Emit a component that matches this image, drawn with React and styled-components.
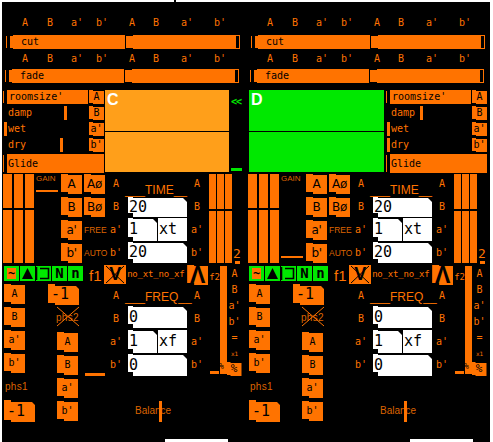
import React from 'react'
import styled, { createGlobalStyle } from 'styled-components'

const ORANGE = '#ff7300'
const DIM = '#dd6400'
const GREEN = '#00e800'
const MONO = '"DejaVu Sans Mono", monospace'
const SANS = '"Liberation Sans", sans-serif'
const DEJAVU = '"DejaVu Sans", sans-serif'

// the patch widgets all have this little step on the left side
const stepped = (w, top = 1, bottom = 2, corner = 0) => `
  clip-path: polygon(
    0 0, ${w}px 0, ${w}px ${top}px,
    calc(100% - ${corner}px) ${top}px, 100% ${top + corner}px,
    100% 100%, ${w}px 100%, ${w}px calc(100% - ${bottom}px), 0 calc(100% - ${bottom}px)
  );
`

const GlobalStyle = createGlobalStyle`
  html, body { margin: 0; padding: 0; background: #fff; }
`

const Panel = styled.div`
  position: relative;
  width: 488px;
  height: 440px;
  margin: 2px 0 0 2px;
  background: #000;
  display: flex;
  &::before {
    content: '';
    position: absolute;
    left: 172px;
    top: -2px;
    width: 2px;
    height: 2px;
    background: #000;
  }
`

const Strip = styled.div`
  width: 245px;
  height: 440px;
  flex: none;
  display: flex;
  flex-direction: column;
`
const BottomNotch = styled.div`
  flex: none;
  width: 63px;
  height: 3px;
  margin: auto 0 0 163px;
  background: #fff;
`

/* ---- crossfade bars ---- */
const FadeRack = styled.div`
  height: 73px;
  padding-top: 15px;
  display: flex;
  flex-direction: column;
  flex: none;
`
const LetterRow = styled.div`
  display: grid;
  grid-template-columns: 22px 28px 26px 24px 36px 12px 50px 16px;
  margin-left: 12px;
  height: 12px;
  margin-bottom: ${p => p.$after}px;
`
const RowLetter = styled.span`
  font: 10px/12px ${MONO};
  color: ${ORANGE};
  text-align: center;
  white-space: pre;
`
const Bar = styled.div`
  display: flex;
  height: 14px;
  margin-left: ${p => p.$shift}px;
  margin-bottom: 4px;
`
const Tick = styled.div`
  width: 1px;
  height: ${p => p.$h || 12}px;
  margin: 1px ${p => p.$gap}px 0 0;
  background: ${ORANGE};
  flex: none;
`
const BarLeft = styled.div`
  width: 115px;
  height: 14px;
  margin-right: 1px;
  background: ${ORANGE};
  font: 10px/14px ${MONO};
  color: #000;
  padding-left: 11px;
  box-sizing: border-box;
  clip-path: polygon(3px 0, 100% 0, 100% 100%, 3px 100%, 3px 13px, 0 13px, 0 1px, 3px 1px);
`
const BarRight = styled.div`
  width: 114px;
  height: 14px;
  background: ${ORANGE};
  display: flex;
  justify-content: flex-end;
  clip-path: polygon(0 1px, 7px 1px, 7px 0, 100% 0, 100% 100%, 7px 100%, 7px 13px, 0 13px);
`
const BarCap = styled.div`
  width: 3px;
  height: 12px;
  margin: 1px 1px 0 0;
  background: #000;
`

/* ---- reverb list and xy pad ---- */
const Reverb = styled.div`
  display: flex;
  flex: none;
  height: 83px;
  margin-bottom: 1px;
  padding-left: ${p => (p.$flip ? 2 : 1)}px;
  gap: ${p => (p.$flip ? 2 : 1)}px;
`
const ParamList = styled.div`
  width: 101px;
  flex: none;
  order: ${p => (p.$flip ? 2 : 1)};
  display: flex;
  flex-direction: column;
  gap: 2px;
`
const ParamRow = styled.div`
  display: grid;
  grid-template-columns: 85px 15px;
  column-gap: 1px;
  height: 14px;
`
const ParamTrack = styled.div`
  position: relative;
  height: 14px;
  font: 10px/14px ${MONO};
  color: ${ORANGE};
  padding-left: 5px;
`
const Handle = styled.i`
  position: absolute;
  top: 0;
  width: 3px;
  height: 14px;
  background: ${ORANGE};
`
const RoomBar = styled.div`
  position: absolute;
  left: 4px;
  right: 0;
  top: 0;
  height: 14px;
  background: ${ORANGE};
  color: #000;
  padding-left: 2px;
`
const ThinTick = styled.i`
  position: absolute;
  left: 0;
  top: 1px;
  width: 1px;
  height: 12px;
  background: ${ORANGE};
`
const SmallBtn = styled.div`
  width: 15px;
  height: 14px;
  background: ${ORANGE};
  font: 10px/14px ${MONO};
  color: #000;
  text-align: center;
  ${stepped(4, 1, 1)}
`
const Glide = styled.div`
  position: relative;
  height: 19px;
  margin-left: 4px;
  background: ${ORANGE};
  font: 10px/19px ${MONO};
  color: #000;
  padding-left: 1px;
  &::before {
    content: '';
    position: absolute;
    left: -4px;
    top: 1px;
    width: 1px;
    height: 17px;
    background: ${ORANGE};
  }
`
const Pad = styled.div`
  position: relative;
  order: ${p => (p.$flip ? 1 : 2)};
  flex: none;
  width: ${p => (p.$flip ? 135 : 124)}px;
  height: 82px;
  background: ${p => p.$bg};
  color: #fff;
  font: bold 16px/16px ${SANS};
  padding: 2px 0 0 2px;
  box-sizing: border-box;
  &::after {
    content: '';
    position: absolute;
    left: 0;
    right: 0;
    top: 41px;
    height: 1px;
    background: #000;
  }
`
const PadSide = styled.div`
  order: 3;
  width: 13px;
  height: 82px;
  display: flex;
  flex-direction: column;
  justify-content: space-between;
  padding: 6px 0 0 1px;
  box-sizing: border-box;
`
const Back = styled.span`
  font: bold 10px/12px ${MONO};
  color: ${GREEN};
  letter-spacing: -1px;
`
const PadLevel = styled.div`
  width: 11px;
  height: 3px;
  margin-bottom: 1px;
  background: ${GREEN};
`

/* ---- gain and time row ---- */
const Upper = styled.div`
  display: flex;
  flex: none;
  height: 90px;
  padding-left: 1px;
`
const Faders = styled.div`
  display: flex;
  gap: ${p => p.$gap}px;
  margin: 0 ${p => p.$after}px 0 ${p => p.$before}px;
`
const Fader = styled.div`
  position: relative;
  width: ${p => p.$w}px;
  height: 89px;
  background: ${ORANGE};
  &::after {
    content: '';
    position: absolute;
    left: 0;
    right: 0;
    top: ${p => p.$notch}px;
    height: 2px;
    background: #000;
  }
`
const GainCol = styled.div`
  width: 22px;
  margin-right: 3px;
  flex: none;
`
const GainText = styled.div`
  font: 8px/10px ${SANS};
  color: ${DIM};
`
const GainBar = styled.div`
  height: 2px;
  margin-top: ${p => p.$at}px;
  background: ${ORANGE};
`
const BtnCol = styled.div`
  width: ${p => p.$w || 21}px;
  flex: none;
  display: flex;
  flex-direction: column;
  gap: 3px;
  margin: ${p => p.$top || 0}px ${p => p.$after || 0}px 0 ${p => p.$before || 0}px;
`
const Btn = styled.div`
  width: 21px;
  height: 20px;
  margin-left: ${p => p.$indent || 0}px;
  background: ${ORANGE};
  color: #000;
  font: 10px/20px ${MONO};
  text-align: center;
  flex: none;
  ${stepped(7)}
`
const BigBtn = styled(Btn)`
  font: 12px/20px ${DEJAVU};
  letter-spacing: -0.4px;
`
const SideLabel = styled.div`
  height: 20px;
  font: 8.5px/20px ${SANS};
  color: ${DIM};
  text-align: center;
  white-space: nowrap;
`
const LetterCol = styled.div`
  width: 12px;
  flex: none;
  display: flex;
  flex-direction: column;
  gap: 3px;
  padding-top: ${p => p.$top || 0}px;
  margin: 0 ${p => p.$after}px 0 ${p => p.$before}px;
`
const Letter = styled.div`
  height: 20px;
  font: 10px/20px ${MONO};
  color: ${ORANGE};
  text-align: center;
  white-space: pre;
`
const NumBlock = styled.div`
  width: 65px;
  flex: none;
`
const BlockTitle = styled.div`
  height: ${p => p.$h}px;
  font: 12px/14px ${SANS};
  color: ${ORANGE};
  white-space: pre;
  padding-top: ${p => p.$top}px;
  box-sizing: border-box;
`
const NumRow = styled.div`
  display: flex;
  margin: 0 0 ${p => p.$after}px 3px;
  width: 59px;
  height: ${p => p.$h}px;
  gap: 1px;
`
const NumBox = styled.div`
  flex: ${p => (p.$tail ? '0 0 28px' : 1)};
  background: #fff;
  color: #000;
  font: 15px/${p => p.$h}px ${MONO};
  padding-left: 1px;
  ${p => (p.$tail ? '' : stepped(5, 1, 4, 4))}
`
const TwoCol = styled.div`
  width: 8px;
  margin-left: 1px;
  display: flex;
  flex-direction: column;
  justify-content: flex-end;
  align-items: center;
`
const Two = styled.div`
  font: 13px/12px ${MONO};
  color: ${ORANGE};
`
const TwoBar = styled.div`
  width: 5px;
  height: 3px;
  margin-top: 1px;
  background: ${ORANGE};
`

/* ---- toggles row ---- */
const Lower = styled.div`
  display: flex;
  flex: none;
`
const LeftCol = styled.div`
  width: 218px;
  flex: none;
`
const Mid = styled.div`
  display: flex;
  height: 19px;
  margin-top: 1px;
  padding-left: 2px;
  align-items: flex-start;
`
const Toggles = styled.div`
  display: flex;
  gap: 1px;
  margin-top: 1px;
  width: 79px;
  flex: none;
`
const Toggle = styled.div`
  width: 15px;
  height: 15px;
  background: ${GREEN};
  color: #000;
  font: bold 14px/15px ${MONO};
  text-align: center;
  flex: none;
`
const ToggleOn = styled.div`
  margin: 2px 3px;
  height: 11px;
  background: ${ORANGE};
  font: bold 12px/10px ${MONO};
`
const F1 = styled.div`
  width: 18px;
  margin: 2px 0 0 6px;
  font: 15px/17px ${SANS};
  color: ${ORANGE};
`
const Cross = styled.div`
  position: relative;
  width: 22px;
  height: 19px;
  background: ${ORANGE};
  color: #000;
  font: bold 18px/19px ${SANS};
  text-align: center;
  flex: none;
  svg {
    position: absolute;
    inset: 0;
  }
`
const NoXf = styled.div`
  width: 60px;
  margin-left: 1px;
  font: 9px/19px ${MONO};
  letter-spacing: -0.2px;
  color: ${ORANGE};
  white-space: nowrap;
  flex: none;
`
const Lambda = styled.div`
  width: 21px;
  height: 20px;
  background: ${ORANGE};
  color: #000;
  font: bold 23px/20px ${SANS};
  text-align: center;
  flex: none;
  ${stepped(7)}
`
const F2 = styled.div`
  margin: 5px 0 0 1px;
  font: 9px/14px ${MONO};
  color: ${ORANGE};
`

/* ---- phase and freq ---- */
const Phase = styled.div`
  display: flex;
  padding-left: 2px;
`
const Col = styled.div`
  width: ${p => p.$w}px;
  flex: none;
  margin-left: ${p => p.$before || 0}px;
  padding-top: ${p => p.$top || 0}px;
  display: flex;
  flex-direction: column;
`
const MinusBox = styled.div`
  width: 31px;
  height: ${p => p.$h}px;
  flex: none;
  background: ${ORANGE};
  color: #000;
  font: 15px/${p => p.$h}px ${MONO};
  padding-left: 3px;
  box-sizing: border-box;
  ${stepped(7, 2, 2, 3)}
  margin-top: ${p => p.$top || 0}px;
`
const PhaseLabel = styled.div`
  position: relative;
  height: ${p => p.$h}px;
  margin-top: ${p => p.$top || 0}px;
  padding-left: ${p => p.$pad || 0}px;
  font: 10px/${p => p.$h}px ${SANS};
  letter-spacing: 0.3px;
  color: ${DIM};
  white-space: nowrap;
  svg {
    position: absolute;
    left: 8px;
    top: 0;
  }
`
const PhaseBar = styled.div`
  height: 3px;
  width: 20px;
  background: ${ORANGE};
`
const Balance = styled.div`
  position: relative;
  height: 21px;
  margin: 25px 0 0 10px;
  width: 38px;
  font: 10px/19px ${SANS};
  color: ${DIM};
  white-space: nowrap;
  &::after {
    content: '';
    position: absolute;
    left: 24px;
    top: 0;
    width: 3px;
    height: 21px;
    background: ${ORANGE};
  }
`

/* ---- long fader on the right ---- */
const RightCol = styled.div`
  display: flex;
  margin-top: 2px;
`
const LongFader = styled.div`
  position: relative;
  width: 7px;
  height: 108px;
  background: ${ORANGE};
  flex: none;
  &::before {
    content: '';
    position: absolute;
    left: -10px;
    bottom: 0;
    width: 9px;
    height: 3px;
    background: ${ORANGE};
  }
`
const FaderPct = styled.span`
  position: absolute;
  left: -1px;
  top: 96px;
  font: 8px/10px ${MONO};
  color: #000;
`
const RightLetters = styled.div`
  width: 15px;
  flex: none;
  display: flex;
  flex-direction: column;
  align-items: center;
`
const RightLetter = styled.div`
  height: 16px;
  font: ${p => p.$size || 10}px/16px ${MONO};
  color: ${ORANGE};
  white-space: pre;
`
const PctBtn = styled.div`
  width: 15px;
  height: 14px;
  margin: 0 0 0 -1px;
  background: ${ORANGE};
  color: #000;
  font: 11px/14px ${MONO};
  text-align: center;
  ${stepped(4, 1, 1)}
`

const LETTERS = ['A', 'B', "a'", "b'"]
const TOP_LETTERS = [...LETTERS, ...LETTERS]

const Letters = ({ after }) => (
  <LetterRow $after={after}>
    {TOP_LETTERS.map((l, i) => <RowLetter key={i}>{l}</RowLetter>)}
  </LetterRow>
)

const FadeBar = ({ label, shift }) => (
  <Bar $shift={shift}>
    <Tick $gap={3} />
    <BarLeft>{label}</BarLeft>
    <BarRight><BarCap /></BarRight>
  </Bar>
)

const Triangle = () => (
  <svg width="15" height="15" viewBox="0 0 15 15">
    <path d="M7.5 2 L13 13 L2 13 Z" fill="#000" />
  </svg>
)

const Bracket = () => (
  <svg width="15" height="15" viewBox="0 0 15 15">
    <path d="M0.5 1 V14 M4 2.5 H12.5 V12.5 H4" fill="none" stroke="#000" strokeWidth="1.6" />
  </svg>
)

const Crossed = () => (
  <svg width="22" height="19" viewBox="0 0 22 19">
    <path d="M2 1 L20 18 M20 1 L2 18" stroke="#000" strokeWidth="1" />
  </svg>
)

const Strike = () => (
  <svg width="24" height="21" viewBox="0 0 24 21">
    <path d="M1 1 L23 20 M23 1 L1 20" stroke={ORANGE} strokeWidth="1" />
  </svg>
)

const STRIPS = [
  { name: 'C', flip: false, pad: '#ff9f1a', damp: 61, wet: 1, dry: 57, gainAt: 6, phaseBar: true },
  { name: 'D', flip: true, pad: GREEN, damp: 34, wet: 1, dry: 1, gainAt: 72, phaseBar: false },
]

const Module = ({ s }) => (
  <Strip>
    <FadeRack>
      <Letters after={6} />
      <FadeBar label="cut" shift={4} />
      <Letters after={4} />
      <FadeBar label="fade" shift={3} />
    </FadeRack>

    <Reverb $flip={s.flip}>
      <ParamList $flip={s.flip}>
        <ParamRow>
          <ParamTrack><ThinTick /><RoomBar>roomsize'</RoomBar></ParamTrack>
          <SmallBtn>A</SmallBtn>
        </ParamRow>
        <ParamRow>
          <ParamTrack>damp<Handle style={{ left: s.damp }} /></ParamTrack>
          <SmallBtn>B</SmallBtn>
        </ParamRow>
        <ParamRow>
          <ParamTrack>wet<Handle style={{ left: s.wet }} /></ParamTrack>
          <SmallBtn>a'</SmallBtn>
        </ParamRow>
        <ParamRow>
          <ParamTrack>dry<Handle style={{ left: s.dry }} /></ParamTrack>
          <SmallBtn>b'</SmallBtn>
        </ParamRow>
        <Glide>Glide</Glide>
      </ParamList>
      <Pad $flip={s.flip} $bg={s.pad}>{s.name}</Pad>
      {!s.flip && (
        <PadSide>
          <Back>{'<<'}</Back>
          <PadLevel />
        </PadSide>
      )}
    </Reverb>

    <Upper>
      <Faders $gap={2} $before={0} $after={2}>
        <Fader $w={9} $notch={34} />
        <Fader $w={9} $notch={34} />
        <Fader $w={9} $notch={34} />
      </Faders>
      <GainCol>
        <GainText>GAIN</GainText>
        <GainBar $at={s.gainAt} />
      </GainCol>
      <BtnCol>
        {LETTERS.map(l => <BigBtn key={l}>{l}</BigBtn>)}
      </BtnCol>
      <BtnCol $before={2}>
        <BigBtn>Aø</BigBtn>
        <BigBtn>Bø</BigBtn>
        <SideLabel>FREE</SideLabel>
        <SideLabel>AUTO</SideLabel>
      </BtnCol>
      <LetterCol $before={5} $after={3}>
        {LETTERS.map(l => <Letter key={l}>{l}</Letter>)}
      </LetterCol>
      <NumBlock>
        <BlockTitle $h={23} $top={9}>___TIME__</BlockTitle>
        <NumRow $h={20} $after={1}><NumBox $h={20}>20</NumBox></NumRow>
        <NumRow $h={23} $after={1}><NumBox $h={23}>1</NumBox><NumBox $h={23} $tail>xt</NumBox></NumRow>
        <NumRow $h={21} $after={0}><NumBox $h={21}>20</NumBox></NumRow>
      </NumBlock>
      <LetterCol $before={1} $after={0}>
        {LETTERS.map(l => <Letter key={l}>{l}</Letter>)}
      </LetterCol>
      <Faders $gap={1} $before={6} $after={0}>
        <Fader $w={7} $notch={35} />
        <Fader $w={7} $notch={35} />
        <Fader $w={7} $notch={35} />
      </Faders>
      <TwoCol>
        <Two>2</Two>
        <TwoBar />
      </TwoCol>
    </Upper>

    <Lower>
      <LeftCol>
        <Mid>
          <Toggles>
            <Toggle><ToggleOn>~</ToggleOn></Toggle>
            <Toggle><Triangle /></Toggle>
            <Toggle><Bracket /></Toggle>
            <Toggle>N</Toggle>
            <Toggle>n</Toggle>
          </Toggles>
          <F1>f1</F1>
          <Cross><Crossed />V</Cross>
          <NoXf>no_xt_no_xf</NoXf>
          <Lambda>Λ</Lambda>
          <F2>f2</F2>
        </Mid>
        <Phase>
          <Col $w={21}>
            <BtnCol $w={21}>
              {LETTERS.map(l => <Btn key={l}>{l}</Btn>)}
            </BtnCol>
            <PhaseLabel $h={10} $top={9} $pad={1}>phs1</PhaseLabel>
            <MinusBox $h={22} $top={8}>-1</MinusBox>
          </Col>
          <Col $w={31} $before={23}>
            <MinusBox $h={21}>-1</MinusBox>
            <PhaseLabel $h={23} $top={1} $pad={8}><Strike />phs2</PhaseLabel>
            <BtnCol $w={21} $top={3}>
              {LETTERS.map(l => <Btn key={l} $indent={9}>{l}</Btn>)}
            </BtnCol>
          </Col>
          <Col $w={20} $before={6} $top={89}>
            {s.phaseBar && <PhaseBar />}
          </Col>
          <LetterCol $before={5} $after={3} $top={2}>
            {LETTERS.map(l => <Letter key={l}>{l}</Letter>)}
          </LetterCol>
          <NumBlock>
            <BlockTitle $h={22} $top={6}>___FREQ__</BlockTitle>
            <NumRow $h={22} $after={2}><NumBox $h={22}>0</NumBox></NumRow>
            <NumRow $h={23} $after={1}><NumBox $h={23}>1</NumBox><NumBox $h={23} $tail>xf</NumBox></NumRow>
            <NumRow $h={22} $after={0}><NumBox $h={22}>0</NumBox></NumRow>
            <Balance>Balance</Balance>
          </NumBlock>
          <LetterCol $before={1} $after={0} $top={2}>
            {LETTERS.map(l => <Letter key={l}>{l}</Letter>)}
          </LetterCol>
        </Phase>
      </LeftCol>
      <RightCol>
        <LongFader><FaderPct>%</FaderPct></LongFader>
        <RightLetters>
          {LETTERS.map(l => <RightLetter key={l}>{l}</RightLetter>)}
          <RightLetter>=</RightLetter>
          <RightLetter $size={6}>x1</RightLetter>
          <PctBtn>%</PctBtn>
        </RightLetters>
      </RightCol>
    </Lower>
    <BottomNotch />
  </Strip>
)

export default function App() {
  return (
    <>
      <GlobalStyle />
      <Panel>
        {STRIPS.map(s => <Module key={s.name} s={s} />)}
      </Panel>
    </>
  )
}
